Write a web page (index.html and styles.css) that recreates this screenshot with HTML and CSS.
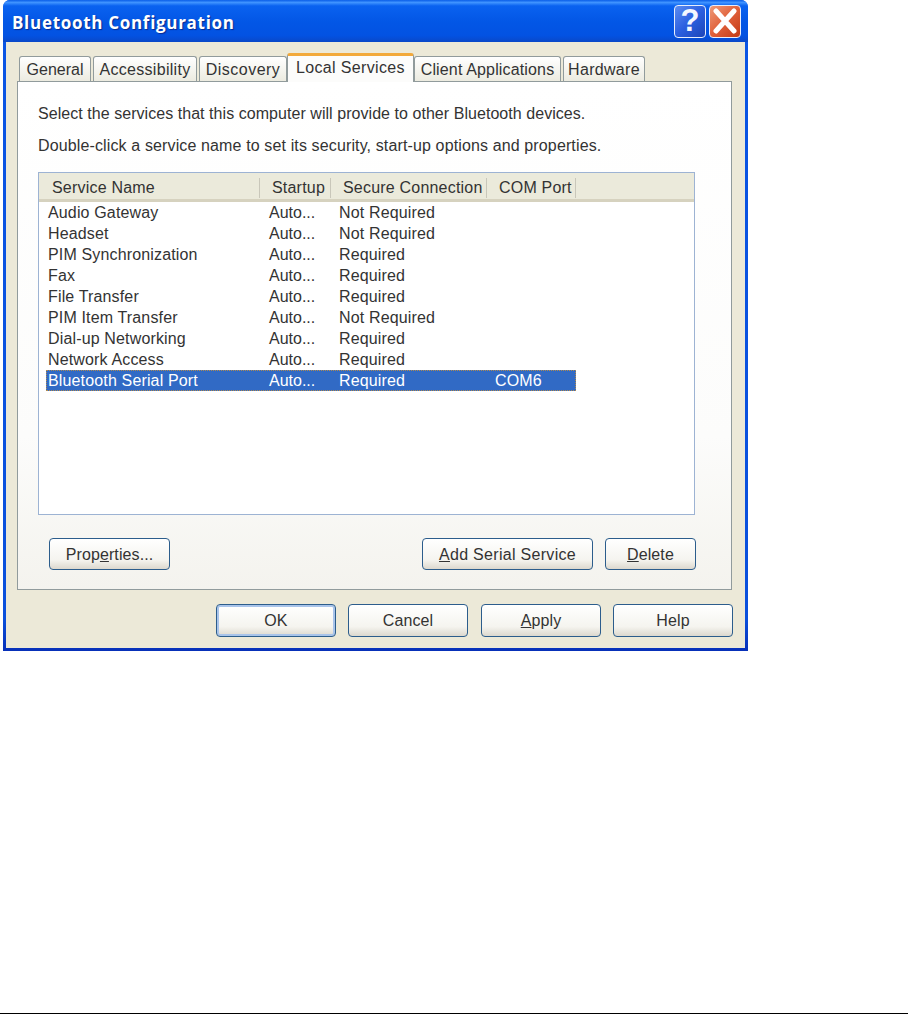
FILE: index.html
```html
<!DOCTYPE html>
<html lang="en">
<head>
    <meta charset="UTF-8">
    <meta name="viewport" content="width=device-width, initial-scale=1.0">
    <title>Bluetooth Configuration</title>
    <link rel="stylesheet" href="styles.css">
</head>
<body>
    <div class="window">
        <header class="titlebar">
            <h1>Bluetooth Configuration</h1>
            <div class="title-buttons">
                <div class="title-btn help-btn">?</div>
                <div class="title-btn close-btn">
                    <svg width="26" height="26" viewBox="0 0 26 26">
                        <path d="M4 3 L22 23 M22 3 L4 23" stroke="#fff" stroke-width="5" stroke-linecap="round" fill="none"/>
                    </svg>
                </div>
            </div>
        </header>

        <div class="window-body">
            <div class="tabs">
                <div class="tab tab-general">General</div>
                <div class="tab tab-access">Accessibility</div>
                <div class="tab tab-discovery">Discovery</div>
                <div class="tab active">Local Services</div>
                <div class="tab tab-client">Client Applications</div>
                <div class="tab tab-hardware">Hardware</div>
            </div>

            <div class="panel">
                <p class="hint">Select the services that this computer will provide to other Bluetooth devices.</p>
                <p class="hint hint-long">Double-click a service name to set its security, start-up options and properties.</p>

                <div class="list">
                    <div class="list-head">
                        <div class="head-cell">Service Name</div>
                        <div class="head-cell">Startup</div>
                        <div class="head-cell">Secure Connection</div>
                        <div class="head-cell">COM Port</div>
                    </div>
                    <div class="row"><span>Audio Gateway</span><span>Auto...</span><span>Not Required</span><span></span></div>
                    <div class="row"><span>Headset</span><span>Auto...</span><span>Not Required</span><span></span></div>
                    <div class="row"><span>PIM Synchronization</span><span>Auto...</span><span>Required</span><span></span></div>
                    <div class="row"><span>Fax</span><span>Auto...</span><span>Required</span><span></span></div>
                    <div class="row"><span>File Transfer</span><span>Auto...</span><span>Required</span><span></span></div>
                    <div class="row"><span>PIM Item Transfer</span><span>Auto...</span><span>Not Required</span><span></span></div>
                    <div class="row"><span>Dial-up Networking</span><span>Auto...</span><span>Required</span><span></span></div>
                    <div class="row"><span>Network Access</span><span>Auto...</span><span>Required</span><span></span></div>
                    <div class="row selected"><span>Bluetooth Serial Port</span><span>Auto...</span><span>Required</span><span>COM6</span></div>
                </div>

                <div class="panel-buttons">
                    <button class="btn btn-properties">Prop<u>e</u>rties...</button>
                    <button class="btn btn-add"><u>A</u>dd Serial Service</button>
                    <button class="btn btn-delete"><u>D</u>elete</button>
                </div>
            </div>

            <div class="dialog-buttons">
                <button class="btn btn-main default">OK</button>
                <button class="btn btn-main btn-cancel">Cancel</button>
                <button class="btn btn-main"><u>A</u>pply</button>
                <button class="btn btn-main">Help</button>
            </div>
        </div>
    </div>

    <div class="page-line"></div>
</body>
</html>
```

FILE: styles.css
```css
html, body {
    height: 100%;
}

body {
    margin: 0;
    background-color: white;
    font-family: 'Liberation Sans', Arial, sans-serif;
    font-size: 16px;
    color: #333;
    display: flex;
    flex-direction: column;
    overflow: hidden;
}

.window {
    width: 745px;
    height: 651px;
    margin-left: 3px;
    flex: none;
    display: flex;
    flex-direction: column;
    box-sizing: border-box;
    background: linear-gradient(to bottom, #0a55e5 0%, #0a50dc 95%, #0830b8 100%);
    border-radius: 7px 7px 0 0;
    overflow: hidden;
}

.titlebar {
    height: 42px;
    flex: none;
    display: flex;
    align-items: center;
    justify-content: space-between;
    padding: 0 7px 0 9px;
    background: linear-gradient(to bottom, #0a5ee8 0%, #3f93ff 6%, #0a62f0 14%, #0357e6 50%, #0352e2 85%, #0a48c8 100%);
}

h1 {
    margin: 0;
    padding-top: 3px;
    font-family: 'Open Sans', 'DejaVu Sans', sans-serif;
    font-size: 17px;
    font-weight: 700;
    letter-spacing: 0.7px;
    color: white;
    text-shadow: 1px 1px 1px #0a2a90;
}

.title-buttons {
    display: flex;
    gap: 3px;
}

.title-btn {
    width: 32px;
    height: 33px;
    box-sizing: border-box;
    border: 1px solid #e8eefc;
    border-radius: 4px;
    display: flex;
    align-items: center;
    justify-content: center;
}

.help-btn {
    background: linear-gradient(135deg, #5c8cf0 0%, #2a5fe0 50%, #1c44b8 100%);
    color: #f4f7ff;
    font-size: 31px;
    font-weight: 700;
}

.close-btn {
    background: linear-gradient(135deg, #ee9a78 0%, #e0603a 50%, #c23a16 100%);
}

.window-body {
    flex: 1;
    margin: 0 3px 3px 3px;
    padding: 11px 13px 0 11px;
    background-color: #ece9d8;
}

.tabs {
    height: 28px;
    padding-left: 2px;
    display: flex;
    align-items: flex-end;
}

.tab {
    height: 25px;
    box-sizing: border-box;
    margin-right: 2px;
    padding-top: 4px;
    text-align: center;
    letter-spacing: 0.3px;
    border: 1px solid #919b9c;
    border-bottom: none;
    border-radius: 3px 3px 0 0;
    background: linear-gradient(to bottom, #ffffff, #ecebe0);
    white-space: nowrap;
}

.tab-general { width: 72px; letter-spacing: 0; }
.tab-access { width: 104px; }
.tab-discovery { width: 88px; margin-right: 0; letter-spacing: 0.5px; }
.tab-client { width: 147px; letter-spacing: 0.15px; }
.tab-hardware { width: 82px; }

.tab.active {
    width: 127px;
    height: 29px;
    margin-right: 0;
    margin-bottom: -1px;
    padding-top: 3px;
    position: relative;
    letter-spacing: 0.35px;
    background: #fcfcfb;
    border-top: 3px solid #f2a93a;
}

.panel {
    height: 509px;
    box-sizing: border-box;
    padding: 22px 36px 0 20px;
    border: 1px solid #919b9c;
    background: linear-gradient(to bottom, #ffffff 0%, #fcfcfb 70%, #f4f3ee 100%);
}

.hint {
    margin: 0 0 12px 0;
    line-height: 20px;
    letter-spacing: 0.05px;
    white-space: nowrap;
}

.hint-long {
    letter-spacing: 0.13px;
}

.list {
    height: 343px;
    box-sizing: border-box;
    margin-top: 16px;
    border: 1px solid #9db3d3;
    background-color: white;
}

.list-head {
    height: 29px;
    box-sizing: border-box;
    display: grid;
    grid-template-columns: 220px 71px 156px 89px;
    align-items: center;
    padding: 4px 0 0 1px;
    background-color: #ebeadb;
    border-bottom: 3px solid #d6d2bf;
}

.head-cell {
    height: 20px;
    line-height: 20px;
    box-sizing: border-box;
    padding-left: 12px;
    letter-spacing: 0.2px;
    border-right: 1px solid #c9c7ba;
    white-space: nowrap;
}

.row {
    height: 21px;
    margin-left: 7px;
    width: 530px;
    display: grid;
    grid-template-columns: 214px 71px 156px 89px;
    align-items: center;
    box-sizing: border-box;
    padding-top: 1px;
    letter-spacing: 0.15px;
    white-space: nowrap;
}

.row span {
    padding-left: 8px;
}

.row span:first-child {
    padding-left: 2px;
}

.row span:nth-child(2) {
    padding-left: 9px;
    letter-spacing: 0;
}

.row.selected {
    background-color: #316ac5;
    color: white;
    outline: 1px dotted #b08a50;
    outline-offset: -1px;
}

.panel-buttons {
    display: flex;
    margin: 23px -1px 0 11px;
}

.btn {
    height: 32px;
    box-sizing: border-box;
    padding: 1px 0 0 0;
    font-family: inherit;
    font-size: 16px;
    color: #333;
    letter-spacing: 0.1px;
    border: 1px solid #2c5d8c;
    border-radius: 4px;
    background: linear-gradient(to bottom, #ffffff 0%, #f5f4ef 70%, #dcd8ce 100%);
}

.btn-properties { width: 121px; }
.btn-add { width: 171px; margin-left: auto; margin-right: 12px; letter-spacing: 0.3px; }
.btn-delete { width: 91px; }

.dialog-buttons {
    display: flex;
    justify-content: flex-end;
    gap: 12px;
    margin: 14px -1px 0 0;
}

.btn-main {
    width: 120px;
    height: 33px;
}

.btn-cancel {
    margin-right: 1px;
}

.btn.default {
    box-shadow: inset 0 0 0 2px #a9c4ea;
}

.page-line {
    margin-top: auto;
    height: 1px;
    flex: none;
    background-color: black;
}
```
